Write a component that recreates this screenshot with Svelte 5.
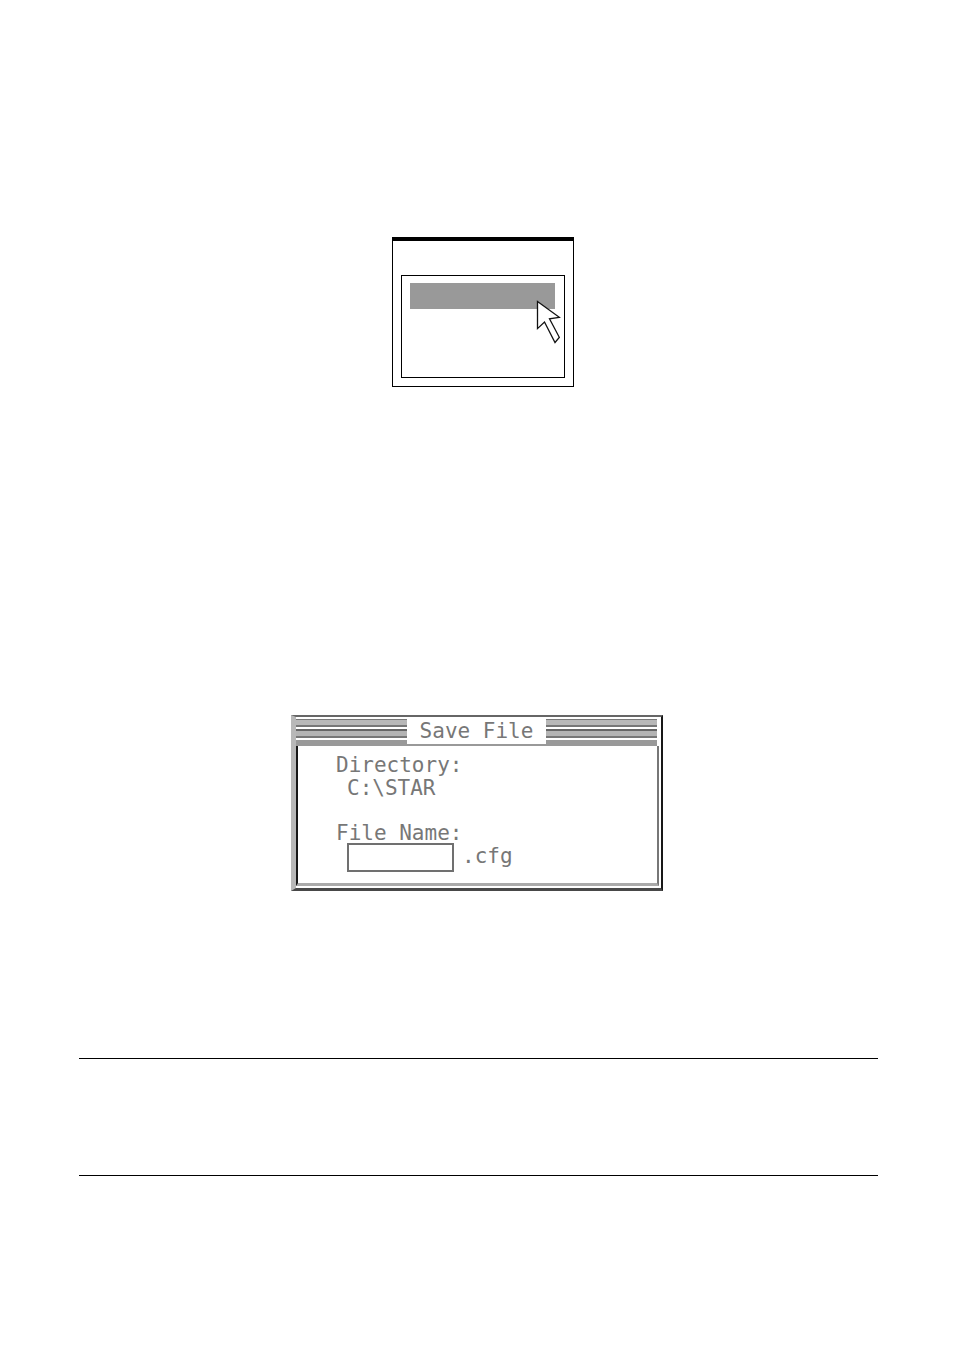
<script>
  let fileName = $state('');
</script>

<main>
  <div class="menu-window">
    <div class="menu-list">
      <div class="selected"></div>
      <svg class="pointer" width="26" height="46" viewBox="0 0 26 46" aria-hidden="true">
        <path d="M1.5 1.5 L23.3 17.3 L13.5 18.8 L23.3 37.3 L19 42.5 L8.5 22 L1.5 28.6 Z" fill="#fff" stroke="#111" stroke-width="1.3" />
      </svg>
    </div>
  </div>

  <form class="dialog" onsubmit={(event) => event.preventDefault()}>
    <header>
      <h1>Save File</h1>
    </header>
    <div class="fields">
      <p>Directory:</p>
      <p class="indent">C:\STAR</p>
      <label for="file-name">File Name:</label>
      <div class="indent entry">
        <input id="file-name" type="text" bind:value={fileName} />
        <span>.cfg</span>
      </div>
    </div>
  </form>

  <section class="note"></section>
</main>

<style>
  :global(body) {
    background: #fff;
  }

  main {
    display: flex;
    flex-direction: column;
    align-items: center;
    padding: 237px 76px 175px 79px;
    font-family: 'DejaVu Sans Mono', monospace;
    font-size: 21px;
    line-height: 23px;
    color: #777;
  }

  .menu-window,
  .menu-list,
  .dialog,
  input {
    box-sizing: border-box;
  }

  .menu-window {
    width: 182px;
    margin-left: 9px;
    padding: 34px 8px 8px;
    border: 1px solid #000;
    border-top-width: 4px;
  }

  .menu-list {
    position: relative;
    height: 103px;
    padding: 7px 9px 0 8px;
    border: 1px solid #000;
  }

  .selected {
    height: 26px;
    background: #999;
  }

  .pointer {
    position: absolute;
    top: 24px;
    right: 2px;
  }

  .dialog {
    width: 100%;
    max-width: 372px;
    margin: 328px 3px 0 0;
    padding: 0 2px 2px 0;
    border-style: solid;
    border-width: 2px 2px 3px 5px;
    border-color: #666 #181818 #484848 #b8b8b8;
  }

  header {
    display: flex;
    justify-content: center;
    margin-right: 2px;
    padding-top: 1px;
    border-bottom: 2px solid #999;
    background: linear-gradient(
      #fff 2px,
      #777 2px 3px,
      #b8b8b8 3px 8px,
      #777 8px 10px,
      #fff 10px 12px,
      #666 12px 14px,
      #b4b4b4 14px 19px,
      #777 19px 21px,
      #fff 21px 23px,
      #999 23px
    );
  }

  h1 {
    margin: 0;
    padding: 2px 13px 1px;
    background: #fff;
    font-size: 21px;
    font-weight: 400;
    line-height: 23px;
  }

  .fields {
    padding: 8px 38px 11px;
    border-style: solid;
    border-width: 0 2px 3px;
    border-color: #999 #777 #aaa #181818;
  }

  p {
    margin: 0;
  }

  label {
    display: block;
    margin-top: 23px;
    line-height: 20px;
  }

  .indent {
    padding-left: 11px;
  }

  .entry {
    display: flex;
    gap: 8px;
  }

  .entry span {
    padding-top: 2px;
  }

  input {
    width: 107px;
    height: 29px;
    padding: 0 4px;
    border: 2px solid #707070;
    border-radius: 0;
    outline: none;
    background: #fff;
    color: inherit;
    font: inherit;
  }

  .note {
    width: 100%;
    height: 116px;
    margin-top: 167px;
    border-top: 1px solid #000;
    border-bottom: 1px solid #000;
  }
</style>
